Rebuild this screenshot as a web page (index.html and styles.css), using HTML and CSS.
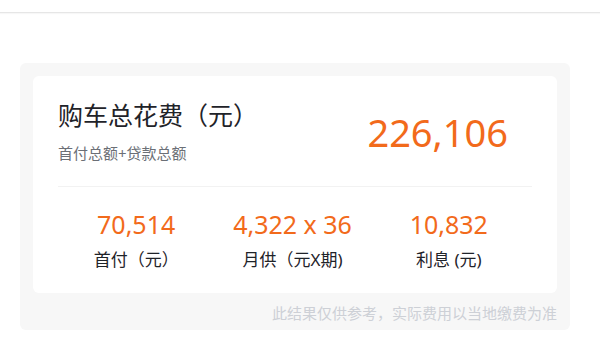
FILE: index.html
```html
<!DOCTYPE html>
<html lang="zh-CN">
<head>
  <meta charset="UTF-8" />
  <meta name="viewport" content="width=device-width, initial-scale=1.0"/>
  <title>购车总花费</title>
  <link rel="stylesheet" href="styles.css">
</head>
<body>

  <div class="top-bar"></div>

  <div class="main">
    <div class="result-box">
      <div class="result-card">
        <div class="total-row">
          <div class="total-info">
            <div class="total-title">购车总花费（元）</div>
            <div class="total-sub">首付总额+贷款总额</div>
          </div>
          <div class="total-value">226,106</div>
        </div>

        <div class="detail-row">
          <div class="detail-item">
            <div class="detail-value">70,514</div>
            <div class="detail-label">首付（元）</div>
          </div>
          <div class="detail-item">
            <div class="detail-value">4,322 x 36</div>
            <div class="detail-label">月供（元X期)</div>
          </div>
          <div class="detail-item">
            <div class="detail-value">10,832</div>
            <div class="detail-label">利息 (元)</div>
          </div>
        </div>
      </div>

      <!-- aviso al pie -->
      <div class="note">此结果仅供参考，实际费用以当地缴费为准</div>
    </div>
  </div>

</body>
</html>
```

FILE: styles.css
```css
body {
  margin: 0;
  padding: 0;
  font-family: "Noto Sans", "Noto Sans CJK SC", sans-serif;
  background: #ffffff;
  color: #1f2329;
}

.top-bar {
  height: 12px;
  border-bottom: 1px solid #e6e6e6;
  box-shadow: 0 1px 1px rgba(0, 0, 0, 0.03);
}

.main {
  padding: 50px 30px 0 20px;
}

.result-box {
  background-color: #f7f7f7;
  border-radius: 6px;
  padding: 13px 13px 7px;
}

.result-card {
  background-color: #ffffff;
  border-radius: 6px;
  padding-bottom: 22px;
}

.total-row {
  display: flex;
  align-items: center;
  justify-content: space-between;
  margin: 0 25px;
  padding: 24px 0 23px;
  border-bottom: 1px solid #f2f2f2;
}

.total-title {
  font-size: 25px;
  line-height: 30px;
  color: #1f2329;
}

.total-sub {
  margin-top: 13px;
  font-size: 15px;
  line-height: 20px;
  color: #6b6f76;
}

.total-value {
  margin-right: 24px;
  font-size: 38px;
  line-height: 50px;
  color: #f26a1b;
}

.detail-row {
  display: grid;
  grid-template-columns: 1fr 1fr 1fr;
  margin: 21px 30px 0 25px;
  text-align: center;
}

.detail-value {
  font-size: 25px;
  line-height: 32px;
  color: #f26a1b;
}

.detail-label {
  margin-top: 9px;
  font-size: 17px;
  line-height: 22px;
  color: #1f2329;
}

.note {
  padding-top: 10px;
  text-align: right;
  font-size: 15px;
  line-height: 20px;
  color: #cdd0d6;
}
```
